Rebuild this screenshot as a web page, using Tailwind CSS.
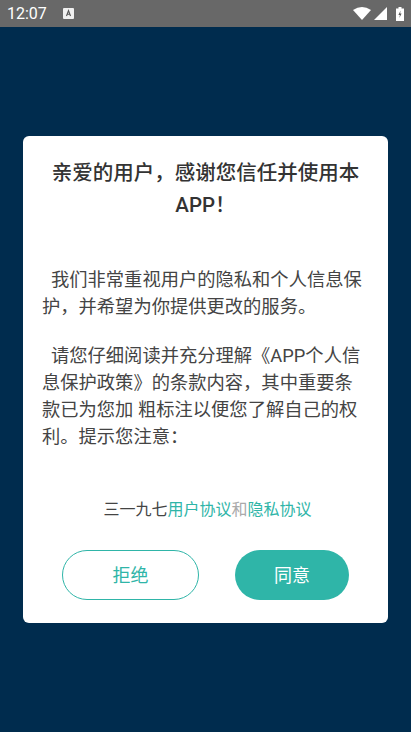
<!DOCTYPE html>
<html lang="zh-CN">
<head>
    <meta charset="UTF-8">
    <meta name="viewport" content="width=device-width, initial-scale=1.0">
    <title>隐私协议</title>
    <script src="https://cdn.jsdelivr.net/npm/@tailwindcss/browser@4"></script>
</head>
<body class="w-[411px] h-[732px] overflow-hidden flex flex-col bg-[#002c4e] font-['Roboto','Noto_Sans_CJK_SC',sans-serif]">
    <!-- Status bar -->
    <div class="h-[27px] shrink-0 bg-[#686868] flex items-center pl-[7px] pr-[7px] text-white">
        <span class="text-[16px] leading-none font-normal">12:07</span>
        <svg class="ml-[16px]" width="11" height="11" viewBox="0 0 11 11">
            <rect x="0" y="0" width="11" height="11" rx="1" fill="#f0f0f0"/>
            <path d="M3.5 8 L5.5 2.5 L7.5 8 M4.2 6.2 H6.8" stroke="#555" stroke-width="1.1" fill="none"/>
        </svg>
        <svg class="ml-auto" width="18" height="13" viewBox="0 0 18 13">
            <path d="M0 3 Q9 -3 18 3 L9 13 Z" fill="#fff"/>
        </svg>
        <svg class="ml-[3px]" width="13" height="13" viewBox="0 0 13 13">
            <path d="M13 0 V13 H0 Z" fill="#fff"/>
        </svg>
        <svg class="ml-[9px]" width="8" height="14" viewBox="0 0 8 14">
            <path d="M2.5 0 H5.5 V1.5 H8 V14 H0 V1.5 H2.5 Z" fill="#fff"/>
            <path d="M4.6 3.5 L2.4 8 H3.9 L3.4 11 L5.6 6.5 H4.1 Z" fill="#555"/>
        </svg>
    </div>

    <!-- Dialog -->
    <main class="flex-1 pt-[109px] px-[23px]">
        <div class="w-[365px] h-[487px] bg-white rounded-[6px] flex flex-col">
            <h1 class="mt-[21px] px-[24px] text-center text-[20.5px] leading-[32px] font-medium text-[#333333]">亲爱的用户，感谢您信任并使用本APP！</h1>
            <div class="mt-[45px] pl-[19px] pr-[24px] text-[18.3px] leading-[27px] text-[#444444]">
                <p class="indent-[9px]">我们非常重视用户的隐私和个人信息保护，并希望为你提供更改的服务。</p>
                <p class="mt-[22px] indent-[9px]">请您仔细阅读并充分理解《APP个人信息保护政策》的条款内容，其中重要条款已为您加 粗标注以便您了解自己的权利。提示您注意：</p>
            </div>
            <p class="mt-[48px] pl-[4px] text-center text-[16px] leading-[24px] text-[#444444]">三一九七<span class="text-[#2fb5a8]">用户协议</span><span class="text-[#aaaaaa]">和</span><span class="text-[#2fb5a8]">隐私协议</span></p>
            <div class="mt-[28px] pl-[39px] flex gap-[36px]">
                <button class="w-[137px] h-[50px] rounded-full border border-[#2fb5a8] text-[18px] text-[#2fb5a8]">拒绝</button>
                <button class="w-[114px] h-[50px] rounded-full bg-[#2fb5a8] text-[18px] text-white">同意</button>
            </div>
        </div>
    </main>
</body>
</html>
